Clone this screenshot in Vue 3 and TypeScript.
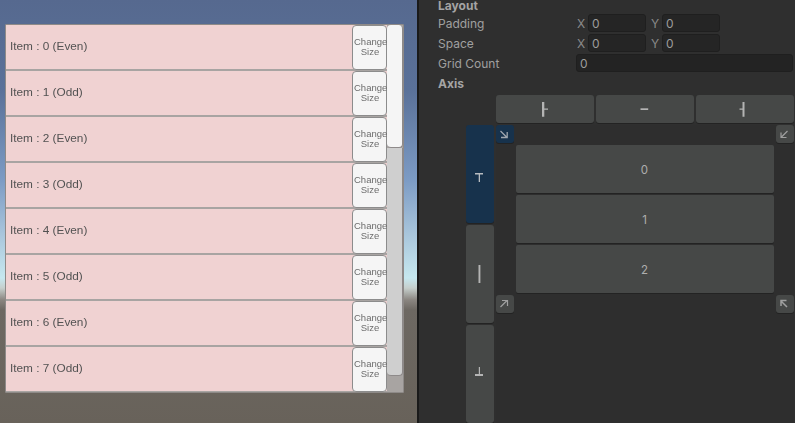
<script setup lang="ts">
const items = [0, 1, 2, 3, 4, 5, 6, 7].map((i) => ({
  id: i,
  label: `Item : ${i} (${i % 2 === 0 ? 'Even' : 'Odd'})`,
}))
const fields = [
  { name: 'Padding', x: '0', y: '0' },
  { name: 'Space', x: '0', y: '0' },
]
const rows = ['0', '1', '2']
</script>

<template>
  <div class="root">
    <section class="scene">
      <div class="scroll">
        <div class="list">
          <div v-for="item in items" :key="item.id" class="row">
            <span class="label">{{ item.label }}</span>
            <button class="change">Change<br />Size</button>
          </div>
        </div>
        <div class="track">
          <div class="thumb"></div>
          <div class="thumb2"></div>
        </div>
      </div>
    </section>
    <section class="inspector">
      <div class="heading first">Layout</div>
      <div v-for="f in fields" :key="f.name" class="prop">
        <span class="pname">{{ f.name }}</span>
        <span class="axis">X</span><span class="num">{{ f.x }}</span>
        <span class="axis y">Y</span><span class="num">{{ f.y }}</span>
      </div>
      <div class="prop">
        <span class="pname grid">Grid Count</span>
        <span class="num wide">0</span>
      </div>
      <div class="heading axis-head">Axis</div>
      <div class="htabs">
        <button class="tab">
          <svg width="16" height="16" viewBox="0 0 16 16"><path d="M5 1h2.300v14.700H5zM7.300 7.500H11v1.200H7.300z" fill="#b4b4b4" /></svg>
        </button>
        <button class="tab">
          <svg width="16" height="16" viewBox="0 0 16 16"><path d="M3.500 7.300h7.700V9H3.500z" fill="#b4b4b4" /></svg>
        </button>
        <button class="tab">
          <svg width="16" height="16" viewBox="0 0 16 16"><path d="M5.500 1h2v14.700h-2zM2.500 7.500h3v1.200h-3z" fill="#b4b4b4" /></svg>
        </button>
      </div>
      <div class="matrix">
        <div class="vtabs">
          <button class="vtab on">
            <svg class="ico" width="16" height="16" viewBox="0 0 16 16"><path d="M3 7h8v1.500H3zM6.700 8.500H8V16H6.700z" fill="#b8bcc0" /></svg>
          </button>
          <button class="vtab">
            <svg class="ico" width="16" height="16" viewBox="0 0 16 16"><path d="M6.500-1h1.900v18H6.500z" fill="#b4b4b4" /></svg>
          </button>
          <button class="vtab">
            <svg class="ico" width="16" height="16" viewBox="0 0 16 16"><path d="M3 8h8v2H3zM6.800 1H8v7H6.800z" fill="#b4b4b4" /></svg>
          </button>
        </div>
        <div class="board">
          <div class="corners">
            <button class="corner on">
              <svg width="12" height="12" viewBox="0 0 12 12"><path d="M1.500 3L8 9.500M2 9.500h6.200V4" fill="none" stroke="#9fa6ae" stroke-width="1.300" /></svg>
            </button>
            <button class="corner">
              <svg width="12" height="12" viewBox="0 0 12 12"><path d="M8.500 3L2 9.500M2 4.500v5h5.500" fill="none" stroke="#a0a0a0" stroke-width="1.200" /></svg>
            </button>
          </div>
          <div class="cells">
            <div v-for="r in rows" :key="r" class="cell">{{ r }}</div>
          </div>
          <div class="corners low">
            <button class="corner">
              <svg width="12" height="12" viewBox="0 0 12 12"><path d="M1.500 9L8 2.500M3 2.500h5.500V8" fill="none" stroke="#a0a0a0" stroke-width="1.200" /></svg>
            </button>
            <button class="corner">
              <svg width="12" height="12" viewBox="0 0 12 12"><path d="M8 9L2 3M2 8V2.500h5.500" fill="none" stroke="#a0a0a0" stroke-width="1.500" /></svg>
            </button>
          </div>
        </div>
      </div>
    </section>
  </div>
</template>

<style>
html, body { margin: 0; background: #2f2f2f; overflow: hidden; }
</style>

<style scoped>
.root {
  width: 795px;
  height: 423px;
  display: flex;
  overflow: hidden;
  font-family: "Liberation Sans", Arial, sans-serif;
}
.scene {
  width: 417px;
  height: 423px;
  flex: none;
  box-sizing: border-box;
  padding: 24px 0 0 5px;
  background: linear-gradient(180deg, #56698f 0, #5a7199 90px, #7c9bc4 180px, #a9c6dc 235px, #c6e8ef 278px, #c6cfcc 288px, #8a8580 300px, #6d6862 310px, #68625a 423px);
}
.scroll {
  width: 399px;
  height: 369px;
  box-sizing: border-box;
  display: flex;
  background: #a8a4a2;
  border: 1px solid #8e8a88;
  border-radius: 1px;
  filter: blur(0.35px);
}
.list {
  width: 381px;
  flex: none;
  display: flex;
  flex-direction: column;
  gap: 2px;
}
.row {
  height: 44px;
  flex: none;
  display: flex;
  align-items: flex-start;
  justify-content: space-between;
  background: #f0d2d2;
}
.label {
  align-self: center;
  margin: 0 0 2px 4px;
  font-size: 11.8px;
  color: #525252;
}
.change {
  width: 35px;
  height: 45px;
  padding: 0 0 2px 1px;
  box-sizing: border-box;
  border: 1px solid #8c8c8c;
  border-radius: 4px;
  background: #f5f5f5;
  color: #6c6c6c;
  font: 9.5px/10px "Liberation Sans", Arial, sans-serif;
}
.track {
  flex: 1;
  display: flex;
  flex-direction: column;
}
.thumb {
  height: 123px;
  box-sizing: border-box;
  background: #f5f5f5;
  border: solid #8e8a8a;
  border-width: 0 1px 1px 0;
  border-radius: 4px;
}
.thumb2 {
  height: 228px;
  box-sizing: border-box;
  background: #cfcfcf;
  border: solid #8e8a8a;
  border-width: 0 1px 1px 0;
  border-radius: 0 0 4px 4px;
}
.inspector {
  flex: 1;
  box-sizing: border-box;
  border-left: 2px solid #1a1a1a;
  background: #2f2f2f;
  padding: 0 0 0 19px;
  color: #a0a0a0;
  font-family: Inter, "Liberation Sans", sans-serif;
  font-size: 12px;
}
.heading {
  font-weight: 700;
  color: #a4a4a4;
}
.heading.first { height: 13px; line-height: 11px; }
.heading.axis-head { height: 21px; line-height: 22px; }
.prop {
  height: 20px;
  display: flex;
  align-items: center;
}
.pname { width: 139px; flex: none; padding-top: 1px; }
.pname.grid { width: 138px; }
.axis { width: 11px; flex: none; color: #8a8a8a; padding-top: 1px; }
.axis.y { width: 16px; padding-left: 5px; box-sizing: border-box; }
.num {
  width: 58px;
  height: 18px;
  line-height: 17px;
  box-sizing: border-box;
  padding-left: 3px;
  background: #252525;
  border: 1px solid #1f1f1f;
  border-radius: 3px;
  color: #9c9c9c;
}
.num.wide { width: 217px; background: #232323; }
.htabs {
  display: flex;
  gap: 2px;
  margin: 1px 0 0 58px;
  width: 298px;
}
.tab, .vtab, .corner {
  border: 0;
  padding: 0;
  display: flex;
  align-items: center;
  justify-content: center;
  background: #464847;
  box-shadow: 0 1px 0 #232323;
  border-radius: 3px;
}
.tab { flex: 1; height: 28px; }
.matrix {
  display: flex;
  margin: 2px 0 0 28px;
  height: 298px;
}
.vtabs {
  width: 28px;
  flex: none;
  display: flex;
  flex-direction: column;
  gap: 2px;
}
.vtab { width: 28px; height: 98px; flex: none; }
.vtab.on { background: #17324c; }
.ico { overflow: visible; }
.board {
  width: 298px;
  flex: none;
  margin-left: 2px;
  display: flex;
  flex-direction: column;
  background: #2e2e2e;
}
.corners {
  display: flex;
  justify-content: space-between;
  height: 18px;
  flex: none;
}
.corners.low { margin-top: 2px; }
.corner { width: 18px; height: 18px; }
.corner.on { background: #17324c; }
.cells {
  margin: 2px 20px 0;
  display: flex;
  flex-direction: column;
  gap: 2px;
}
.cell {
  height: 48px;
  box-sizing: border-box;
  padding: 2px 1px 0 0;
  display: flex;
  align-items: center;
  justify-content: center;
  background: #464847;
  border-radius: 2px;
  box-shadow: 0 1px 0 #232323;
  color: #aeaeae;
  font-size: 11.5px;
}
</style>
